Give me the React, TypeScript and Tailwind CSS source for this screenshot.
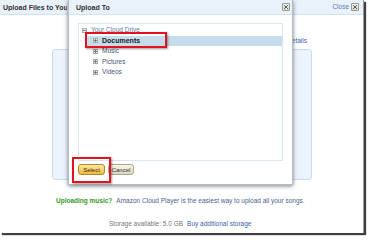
import { ReactNode } from 'react';

function CloseBox() {
  return (
    <span className="inline-flex w-[8px] h-[8px] items-center justify-center rounded-[1px] border border-[#9a9a86] bg-gradient-to-b from-[#f6f6ec] to-[#d6d6c2]">
      <svg width="6" height="6" viewBox="0 0 6 6">
        <path d="M1.2 1.2L4.8 4.8M4.8 1.2L1.2 4.8" stroke="#4a4f78" strokeWidth="1" />
      </svg>
    </span>
  );
}

function TreeToggle({ open }: { open?: boolean }) {
  return (
    <span className="inline-flex w-[5px] h-[5px] items-center justify-center border border-[#a8a8a8] bg-[#eeeeee]">
      <svg width="3" height="3" viewBox="0 0 3 3">
        <path d="M0 1.5H3" stroke="#666" strokeWidth="0.8" />
        {!open && <path d="M1.5 0V3" stroke="#666" strokeWidth="0.8" />}
      </svg>
    </span>
  );
}

function TreeRow({ children, selected }: { children: ReactNode; selected?: boolean }) {
  return (
    <div
      className={`flex items-center gap-[4px] h-[10.5px] pl-[8px] ${
        selected ? 'bg-[#c5dceb] text-[#1a1a1a] font-bold text-[7px]' : 'text-[#4c5a78]'
      }`}
    >
      <TreeToggle />
      <span>{children}</span>
    </div>
  );
}

export default function App() {
  return (
    <div className="w-[368px] h-[240px] bg-white font-['Liberation_Sans',Arial,sans-serif] text-[6.5px] leading-none">
      <div className="relative w-[364px] h-[233px] bg-white border-r border-[#9a9a9a] shadow-[2px_2px_1px_rgba(0,0,0,0.75)]">
        {/* background window header */}
        <div className="flex items-center justify-between h-[15px] px-[3px] bg-[#e9f1fb] border-b border-[#d3e2f2]">
          <span className="w-[64px] overflow-hidden whitespace-nowrap font-bold text-[7px] text-[#333]">Upload Files to Your Cloud Drive</span>
          <span className="flex items-center gap-[2px] pr-[1px]">
            <span className="text-[#5b7bb4]">Close</span>
            <CloseBox />
          </span>
        </div>

        <div className="flex justify-end pr-[56px] pt-[23px] h-[34px] text-[#3d62a8]">Details</div>

        {/* blue panel */}
        <div className="ml-[52px] w-[260px] h-[131px] rounded-[3px] border border-[#c6daf0] bg-[#edf3fc]" />

        <div className="flex items-center gap-[4px] pl-[56px] mt-[17px] h-[8px]">
          <span className="font-bold text-[#3a9a2a]">Uploading music?</span>
          <span className="text-[#4c5f8c]">Amazon Cloud Player is the easiest way to upload all your songs.</span>
        </div>

        <div className="flex items-center gap-[4px] pl-[109px] mt-[15px] h-[8px]">
          <span className="text-[#777]">Storage available: 5.0 GB</span>
          <span className="text-[#3d62a8]">Buy additional storage</span>
        </div>

        {/* Upload To dialog */}
        <div className="absolute left-[68px] top-0 w-[225px] h-[185px] bg-white border border-[#b5bcc4] border-t-0 shadow-[0_1px_4px_rgba(60,70,80,0.7)]">
          <div className="flex items-center justify-between h-[15px] pl-[7px] pr-[2px] bg-[#e9f1fb] border-b border-[#d3e2f2]">
            <span className="font-bold text-[7px] text-[#333]">Upload To</span>
            <CloseBox />
          </div>
          <div className="mx-[9px] mt-[8px] h-[138px] border border-[#d8e8f6] pt-[1px]">
            <div className="flex items-center gap-[4px] h-[10.5px] pl-[3px] text-[#6a7a98]">
              <TreeToggle open />
              <span>Your Cloud Drive</span>
            </div>
            <div className="pl-[6px]">
              <TreeRow selected>Documents</TreeRow>
              <TreeRow>Music</TreeRow>
              <TreeRow>Pictures</TreeRow>
              <TreeRow>Videos</TreeRow>
            </div>
          </div>
          <div className="flex gap-[3px] pl-[9px] mt-[3px]">
            <button className="h-[11px] w-[27px] rounded-[3px] border border-[#b08a2a] bg-gradient-to-b from-[#fde7a0] to-[#f0b93a] text-[6px] text-[#3a2a00]">
              Select
            </button>
            <button className="h-[11px] w-[26px] rounded-[3px] border border-[#a9a98a] bg-gradient-to-b from-[#f7f7ea] to-[#d9d8bf] text-[6px] text-[#333]">
              Cancel
            </button>
          </div>
        </div>

        {/* annotation boxes */}
        <div className="absolute left-[85px] top-[32px] w-[82px] h-[16px] border-2 border-[#e3121c] shadow-[1px_1px_2px_rgba(0,0,0,0.4)]" />
        <div className="absolute left-[72px] top-[157px] w-[39px] h-[26px] border-2 border-[#e3121c] shadow-[1px_1px_2px_rgba(0,0,0,0.4)]" />
      </div>
    </div>
  );
}
